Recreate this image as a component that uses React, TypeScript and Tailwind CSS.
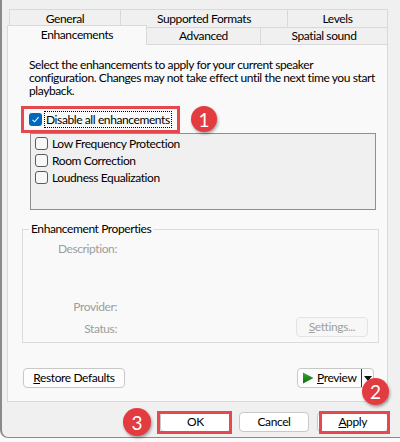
import React from 'react';

const Box: React.FC<{ checked?: boolean }> = ({ checked }) =>
  checked ? (
    <span className="w-[13px] h-[13px] rounded-[3px] bg-[#0067c0] flex items-center justify-center shrink-0">
      <svg width="9" height="9" viewBox="0 0 9 9">
        <path d="M1.5 4.8 L3.6 6.8 L7.6 2.2" fill="none" stroke="#fff" strokeWidth="1.1" />
      </svg>
    </span>
  ) : (
    <span className="w-[13px] h-[13px] rounded-[3px] border border-[#5c5c5c] bg-[#f7f7f7] shrink-0" />
  );

const Badge: React.FC<{ n: string; className: string }> = ({ n, className }) => (
  <div
    className={`absolute rounded-full bg-[#e23b40] text-white flex items-center justify-center text-[19px] tracking-normal leading-none shadow-[1px_2px_3px_rgba(0,0,0,0.35)] ${className}`}
  >
    {n}
  </div>
);

const App: React.FC = () => {
  return (
    <div className="relative w-[400px] h-[442px] bg-[#fafafa] overflow-hidden font-['Lato',sans-serif] text-[12px] tracking-[-0.4px] text-black">
      <div className="h-[438px] bg-[#f0f0f0] border-l-2 border-b border-[#8a8a8a] rounded-bl-[8px] pt-[9px] pl-[5px] pr-[12px]">
        {/* tabs */}
        <div className="flex flex-col">
          <div className="flex h-[18px] ml-[2px] leading-[17px]">
            <div className="w-[111px] border-t border-l border-[#d9d9d9] text-center">General</div>
            <div className="w-[167px] border-t border-l border-[#d9d9d9] text-center">Supported Formats</div>
            <div className="w-[101px] border-t border-l border-r border-[#d9d9d9] text-center">Levels</div>
          </div>
          <div className="flex h-[17px] items-end">
            <div className="relative z-10 w-[140px] h-[20px] -mb-px bg-[#f9f9f9] border-t border-l border-r border-[#d9d9d9] text-center leading-[17px]">
              Enhancements
            </div>
            <div className="w-[113px] h-[17px] border-t border-[#d9d9d9] text-center leading-[16px]">Advanced</div>
            <div className="w-[128px] h-[17px] border-t border-l border-r border-[#d9d9d9] text-center leading-[16px]">Spatial sound</div>
          </div>
        </div>

        {/* page */}
        <div className="h-[358px] bg-[#f9f9f9] border border-[#d9d9d9] flex flex-col">
          <p className="mt-[13px] pl-[21px] pr-[6px] leading-[13px]">
            Select the enhancements to apply for your current speaker configuration. Changes may not take effect until the next time you start playback.
          </p>
          <div className="mt-[13px] h-[18px] pl-[21px] flex items-center gap-[2px]">
            <Box checked />
            <span className="border border-dotted border-black px-[1px] leading-[15px]">Disable all enhancements</span>
          </div>
          <div className="mt-[5px] ml-[22px] w-[346px] h-[77px] bg-[#f0f0f0] border border-[#8f8f8f] pt-[1px] pl-[4px]">
            {['Low Frequency Protection', 'Room Correction', 'Loudness Equalization'].map((t) => (
              <div key={t} className="h-[17px] flex items-center gap-[4px]">
                <Box />
                <span>{t}</span>
              </div>
            ))}
          </div>

          <div className="relative mt-[19px] ml-[14px] w-[357px] h-[114px] border border-[#dcdcdc] flex flex-col">
            <span className="absolute -top-[9px] left-[6px] bg-[#f9f9f9] px-[2px] leading-[16px]">Enhancement Properties</span>
            <div className="mt-[12px] w-[94px] text-right leading-[14px] text-[#9d9d9d]">Description:</div>
            <div className="mt-[44px] w-[94px] text-right leading-[14px] text-[#9d9d9d]">Provider:</div>
            <div className="mt-[3px] flex items-start">
              <div className="mt-[5px] w-[94px] text-right leading-[14px] text-[#9d9d9d]">Status:</div>
              <div className="ml-auto mr-[10px] w-[72px] h-[20px] rounded-[4px] border border-[#e3e3e3] bg-[#f7f7f7] text-[#a0a0a0] flex items-center justify-center leading-none">
                <span><span className="underline">S</span>ettings...</span>
              </div>
            </div>
          </div>

          <div className="mt-[25px] flex items-center pl-[15px] pr-[13px]">
            <div className="w-[102px] h-[20px] rounded-[4px] border border-[#c8c8c8] bg-[#fdfdfd] flex items-center justify-center leading-none">
              <span><span className="underline">R</span>estore Defaults</span>
            </div>
            <div className="ml-auto w-[77px] h-[20px] rounded-[4px] border border-[#c8c8c8] bg-[#fdfdfd] flex items-center">
              <svg width="12" height="12" viewBox="0 0 12 12" className="ml-[4px]">
                <defs>
                  <linearGradient id="pg" x1="0" y1="0" x2="0" y2="1">
                    <stop offset="0" stopColor="#3aa83a" />
                    <stop offset="1" stopColor="#0f6b12" />
                  </linearGradient>
                </defs>
                <path d="M1 0.5 L11.5 6 L1 11.5 Z" fill="url(#pg)" />
              </svg>
              <span className="ml-[3px] leading-none">
                <span className="underline">P</span>review
              </span>
              <div className="ml-auto h-full w-[12px] border-l border-[#303030] flex items-center justify-center">
                <svg width="8" height="5" viewBox="0 0 8 5">
                  <path d="M0 0 H8 L4 5 Z" fill="#111" />
                </svg>
              </div>
            </div>
          </div>
        </div>

        {/* dialog buttons */}
        <div className="mt-[10px] flex gap-[8px] pl-[153px]">
          <div className="w-[72px] h-[20px] rounded-[4px] border border-[#c8c8c8] bg-white flex items-center justify-center leading-none">OK</div>
          <div className="w-[72px] h-[20px] rounded-[4px] border border-[#c8c8c8] bg-white flex items-center justify-center leading-none">Cancel</div>
          <div className="w-[72px] h-[20px] rounded-[4px] border border-[#c8c8c8] bg-white flex items-center justify-center leading-none">
            <span><span className="underline">A</span>pply</span>
          </div>
        </div>
      </div>

      {/* annotations */}
      <div className="absolute left-[21px] top-[106px] w-[159px] h-[27px] border-[3px] border-[#e5484d]" />
      <div className="absolute left-[157px] top-[411px] w-[75px] h-[23px] border-[3px] border-[#e5484d]" />
      <div className="absolute left-[319px] top-[411px] w-[71px] h-[23px] border-[3px] border-[#e5484d]" />
      <Badge n="1" className="left-[191px] top-[106px] w-[26px] h-[26px]" />
      <Badge n="2" className="left-[362px] top-[378px] w-[27px] h-[27px]" />
      <Badge n="3" className="left-[123px] top-[408px] w-[28px] h-[28px]" />
    </div>
  );
};

export default App;
